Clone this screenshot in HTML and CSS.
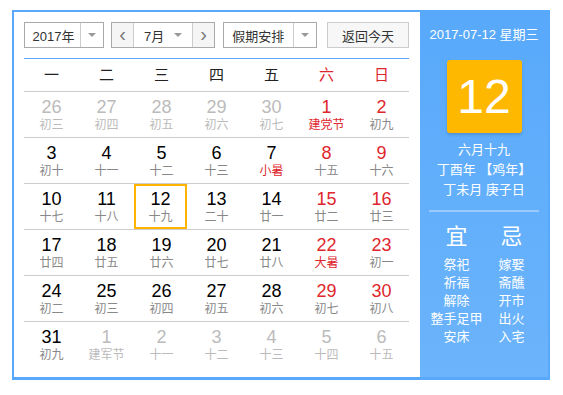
FILE: index.html
```html
<!DOCTYPE html>
<html lang="zh-CN">
<head>
    <meta charset="UTF-8">
    <title>万年历</title>
    <link rel="stylesheet" href="styles.css">
</head>
<body>
    <div class="calendar">
        <div class="main">
            <div class="toolbar">
                <div class="select year-select">
                    <span class="select-text">2017年</span>
                    <span class="select-arrow"><i class="caret"></i></span>
                </div>
                <div class="month-group">
                    <span class="nav-btn">&lsaquo;</span>
                    <span class="month-select">
                        <span class="month-text">7月</span>
                        <i class="caret"></i>
                    </span>
                    <span class="nav-btn">&rsaquo;</span>
                </div>
                <div class="select holiday-select">
                    <span class="select-text">假期安排</span>
                    <span class="select-arrow"><i class="caret"></i></span>
                </div>
                <button class="today-btn">返回今天</button>
            </div>

            <div class="weekdays">
                <span>一</span><span>二</span><span>三</span><span>四</span><span>五</span>
                <span class="red">六</span><span class="red">日</span>
            </div>

            <div class="week">
                <div class="day other"><b>26</b><em>初三</em></div>
                <div class="day other"><b>27</b><em>初四</em></div>
                <div class="day other"><b>28</b><em>初五</em></div>
                <div class="day other"><b>29</b><em>初六</em></div>
                <div class="day other"><b>30</b><em>初七</em></div>
                <div class="day weekend"><b>1</b><em class="fest">建党节</em></div>
                <div class="day weekend"><b>2</b><em>初九</em></div>
            </div>
            <div class="week">
                <div class="day"><b>3</b><em>初十</em></div>
                <div class="day"><b>4</b><em>十一</em></div>
                <div class="day"><b>5</b><em>十二</em></div>
                <div class="day"><b>6</b><em>十三</em></div>
                <div class="day"><b>7</b><em class="fest">小暑</em></div>
                <div class="day weekend"><b>8</b><em>十五</em></div>
                <div class="day weekend"><b>9</b><em>十六</em></div>
            </div>
            <div class="week">
                <div class="day"><b>10</b><em>十七</em></div>
                <div class="day"><b>11</b><em>十八</em></div>
                <div class="day today"><b>12</b><em>十九</em></div>
                <div class="day"><b>13</b><em>二十</em></div>
                <div class="day"><b>14</b><em>廿一</em></div>
                <div class="day weekend"><b>15</b><em>廿二</em></div>
                <div class="day weekend"><b>16</b><em>廿三</em></div>
            </div>
            <div class="week">
                <div class="day"><b>17</b><em>廿四</em></div>
                <div class="day"><b>18</b><em>廿五</em></div>
                <div class="day"><b>19</b><em>廿六</em></div>
                <div class="day"><b>20</b><em>廿七</em></div>
                <div class="day"><b>21</b><em>廿八</em></div>
                <div class="day weekend"><b>22</b><em class="fest">大暑</em></div>
                <div class="day weekend"><b>23</b><em>初一</em></div>
            </div>
            <div class="week">
                <div class="day"><b>24</b><em>初二</em></div>
                <div class="day"><b>25</b><em>初三</em></div>
                <div class="day"><b>26</b><em>初四</em></div>
                <div class="day"><b>27</b><em>初五</em></div>
                <div class="day"><b>28</b><em>初六</em></div>
                <div class="day weekend"><b>29</b><em>初七</em></div>
                <div class="day weekend"><b>30</b><em>初八</em></div>
            </div>
            <div class="week last">
                <div class="day"><b>31</b><em>初九</em></div>
                <div class="day other"><b>1</b><em>建军节</em></div>
                <div class="day other"><b>2</b><em>十一</em></div>
                <div class="day other"><b>3</b><em>十二</em></div>
                <div class="day other"><b>4</b><em>十三</em></div>
                <div class="day other"><b>5</b><em>十四</em></div>
                <div class="day other"><b>6</b><em>十五</em></div>
            </div>
        </div>

        <div class="side">
            <div class="side-date">2017-07-12 星期三</div>
            <div class="big-day">12</div>
            <div class="lunar">
                <p>六月十九</p>
                <p>丁酉年 【鸡年】</p>
                <p>丁未月 庚子日</p>
            </div>
            <div class="divider"></div>
            <div class="almanac">
                <div class="col">
                    <h3>宜</h3>
                    <p>祭祀</p>
                    <p>祈福</p>
                    <p>解除</p>
                    <p>整手足甲</p>
                    <p>安床</p>
                </div>
                <div class="col">
                    <h3>忌</h3>
                    <p>嫁娶</p>
                    <p>斋醮</p>
                    <p>开市</p>
                    <p>出火</p>
                    <p>入宅</p>
                </div>
            </div>
        </div>
    </div>
</body>
</html>
```

FILE: styles.css
```css
body {
    margin: 0;
    padding: 10px 0 0 12px;
    background-color: #ffffff;
    font-family: "Liberation Sans", "Noto Sans CJK SC", sans-serif;
    color: #333;
}
.calendar {
    display: flex;
    width: 538px;
    height: 370px;
    box-sizing: border-box;
    border: 2px solid #58a9fb;
    border-bottom-width: 3px;
    background-color: #58a9fb;
}
.main {
    width: 406px;
    flex-shrink: 0;
    box-sizing: border-box;
    padding: 10px 11px 0 10px;
    background-color: #ffffff;
}
.toolbar {
    display: flex;
    height: 26px;
    font-size: 13px;
}
.select {
    display: flex;
    height: 26px;
    box-sizing: border-box;
    border: 1px solid #aaa;
}
.select-text {
    display: flex;
    align-items: center;
    justify-content: center;
    color: #333;
}
.select-arrow {
    display: flex;
    align-items: center;
    justify-content: center;
    width: 23px;
    border-left: 1px solid #ccc;
}
.caret {
    width: 0;
    height: 0;
    border-left: 4px solid transparent;
    border-right: 4px solid transparent;
    border-top: 4px solid #999;
}
.year-select {
    width: 80px;
}
.year-select .select-text {
    width: 55px;
    padding-left: 2px;
}
.month-group {
    display: flex;
    height: 26px;
    width: 104px;
    margin-left: 7px;
    box-sizing: border-box;
    border: 1px solid #aaa;
}
.nav-btn {
    width: 21px;
    display: flex;
    align-items: center;
    justify-content: center;
    background-color: #f5f5f5;
    color: #777;
    font-size: 20px;
    line-height: 1;
    padding-bottom: 3px;
    box-sizing: border-box;
}
.month-select {
    flex: 1;
    display: flex;
    align-items: center;
    justify-content: space-between;
    padding: 0 10px 0 10px;
    border-left: 1px solid #ccc;
    border-right: 1px solid #ccc;
    background-color: #fff;
}
.holiday-select {
    width: 94px;
    margin-left: 8px;
}
.holiday-select .select-text {
    width: 70px;
    font-size: 13px;
}
.today-btn {
    margin-left: 10px;
    width: 82px;
    height: 26px;
    padding: 0;
    border: 1px solid #ccc;
    background-color: #f7f7f7;
    font-family: inherit;
    font-size: 13px;
    color: #333;
}
.weekdays {
    display: grid;
    grid-template-columns: repeat(7, 1fr);
    margin-top: 10px;
    border-top: 1px solid #58a9fb;
    border-bottom: 1px solid #ccc;
    height: 34px;
    box-sizing: border-box;
}
.weekdays span {
    text-align: center;
    font-size: 15px;
    line-height: 32px;
    color: #222;
}
.red {
    color: #e0262d !important;
}
.week {
    display: grid;
    grid-template-columns: repeat(7, 1fr);
    height: 46px;
    box-sizing: border-box;
    border-bottom: 1px solid #ccc;
}
.week.last {
    border-bottom: none;
}
.day {
    display: flex;
    flex-direction: column;
    align-items: center;
    padding-top: 5px;
}
.day b {
    font-weight: normal;
    font-size: 18px;
    line-height: 20px;
    color: #000;
}
.day em {
    font-style: normal;
    font-size: 12px;
    line-height: 17px;
    color: #888;
}
.day.weekend b {
    color: #e0262d;
}
.day em.fest {
    color: #e0262d;
}
.day.other b,
.day.other em {
    color: #bbb;
}
.day.today {
    margin-right: 2px;
    box-shadow: inset 0 0 0 2px #ffb400;
}
.side {
    flex: 1;
    display: flex;
    flex-direction: column;
    align-items: center;
    background: linear-gradient(#58a9fb, #6cb4fb);
    color: #fff;
}
.side-date {
    margin-top: 13px;
    font-size: 13px;
    line-height: 20px;
    white-space: nowrap;
}
.big-day {
    margin-top: 15px;
    width: 75px;
    height: 73px;
    border-radius: 3px;
    background-color: #ffb800;
    box-shadow: 0 2px 3px rgba(0, 0, 0, 0.15);
    font-size: 48px;
    line-height: 73px;
    text-align: center;
}
.lunar {
    margin-top: 7px;
    text-align: center;
    font-size: 13px;
    line-height: 20px;
    white-space: nowrap;
}
.lunar p {
    margin: 0;
}
.divider {
    margin-top: 10px;
    width: 110px;
    height: 2px;
    background-color: rgba(255, 255, 255, 0.35);
}
.almanac {
    display: flex;
    margin-top: 12px;
}
.col {
    width: 55px;
    text-align: center;
}
.col h3 {
    margin: 0 0 6px;
    font-size: 22px;
    font-weight: normal;
    line-height: 26px;
}
.col p {
    margin: 0;
    font-size: 13px;
    line-height: 18px;
    white-space: nowrap;
}
```
